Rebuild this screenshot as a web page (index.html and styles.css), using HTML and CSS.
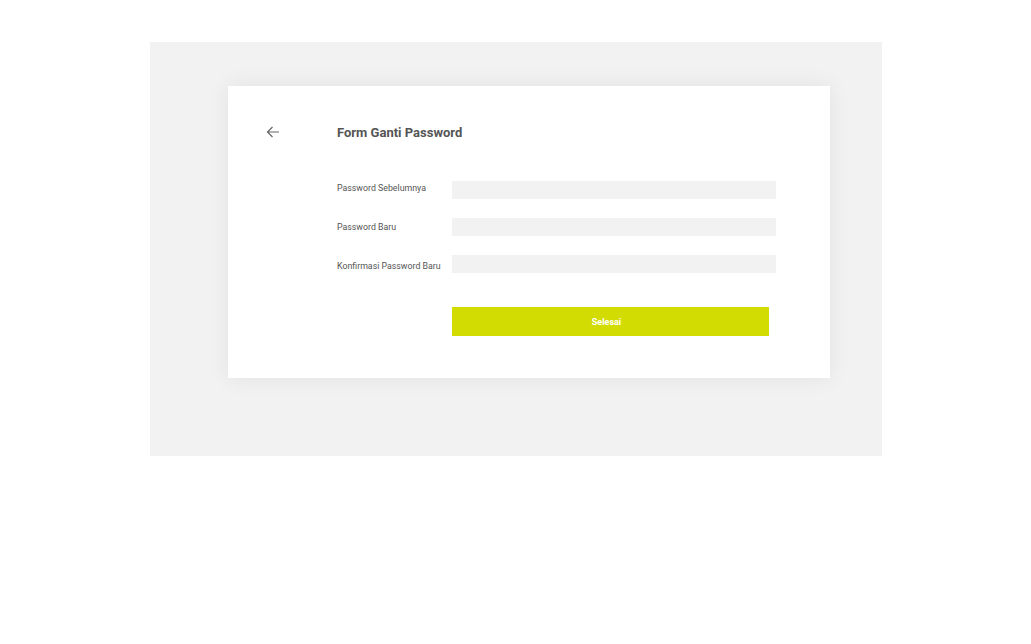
FILE: index.html
```html
<!DOCTYPE html>
<html>
<head>
<meta charset="utf-8">
<link rel="stylesheet" href="styles.css">
</head>
<body>
<div class="page">
  <div class="panel">
    <div class="card">
      <div class="header">
        <svg class="back" width="14" height="12" viewBox="0 0 14 12">
          <path d="M13 6H1.5M6.5 1L1.5 6l5 5" fill="none" stroke="#666" stroke-width="1.2"/>
        </svg>
        <h1 class="title">Form Ganti Password</h1>
      </div>
      <form class="form">
        <div class="fields">
          <div class="labels">
            <label>Password Sebelumnya</label>
            <label>Password Baru</label>
            <label>Konfirmasi Password Baru</label>
          </div>
          <div class="inputs">
            <input type="password" class="input">
            <input type="password" class="input">
            <input type="password" class="input">
          </div>
        </div>
        <button type="button" class="submit">Selesai</button>
      </form>
    </div>
  </div>
</div>
</body>
</html>
```

FILE: styles.css
```css
html, body {
  margin: 0;
  padding: 0;
  background: #fff;
  font-family: Roboto, "Liberation Sans", sans-serif;
}
.page {
  padding: 42px 0 0 150px;
}
.panel {
  width: 732px;
  height: 414px;
  background: #f2f2f2;
  box-sizing: border-box;
  padding: 44px 0 0 78px;
}
.card {
  width: 602px;
  height: 292px;
  background: #fff;
  box-shadow: 0 0 22px rgba(0, 0, 0, 0.07);
  box-sizing: border-box;
  padding: 38px 0 0 38px;
}
.header {
  display: flex;
  align-items: center;
  height: 16px;
}
.back {
  display: block;
  margin-right: 57px;
}
.title {
  margin: 1px 0 0;
  font-size: 13px;
  font-weight: 700;
  color: #555;
  line-height: 16px;
}
.form {
  margin: 41px 0 0 71px;
}
.fields {
  display: flex;
}
.labels {
  width: 115px;
  display: flex;
  flex-direction: column;
  gap: 27px;
  margin-top: 1px;
}
.labels label {
  font-size: 8.8px;
  line-height: 12px;
  color: #555;
  white-space: nowrap;
}
.inputs {
  display: flex;
  flex-direction: column;
  gap: 19px;
}
.input {
  width: 324px;
  height: 18px;
  box-sizing: border-box;
  border: none;
  background: #f2f2f2;
  margin: 0;
  padding: 0;
  outline: none;
}
.submit {
  display: block;
  margin: 34px 0 0 115px;
  width: 317px;
  height: 29px;
  border: none;
  background: #d3dc02;
  color: #fff;
  font-family: Roboto, "Liberation Sans", sans-serif;
  font-size: 9px;
  font-weight: 700;
  padding: 0 8px 0 0;
}
```
